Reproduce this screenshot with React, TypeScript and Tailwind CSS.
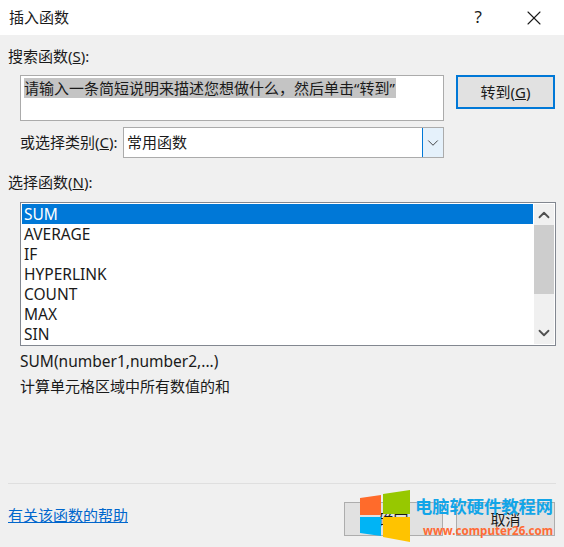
import { ChevronDown, ChevronUp, X } from "lucide-react"

const functions = ["SUM", "AVERAGE", "IF", "HYPERLINK", "COUNT", "MAX", "SIN"]

function Watermark() {
  return (
    <div className="absolute left-[360px] top-[490px] h-[52px] w-[204px]">
      <svg className="absolute left-0 top-0" width="51" height="52" viewBox="0 0 51 52">
        <polygon points="0,8 21,5 21,25 0,25" fill="#ff6b2b" />
        <polygon points="23,4 50,0 50,24 23,24" fill="#97c800" />
        <polygon points="0,27 21,27 21,46 0,43" fill="#00b4f5" />
        <polygon points="23,27 50,27 50,52 23,47" fill="#ffc300" />
      </svg>
      <div className="absolute left-[55px] top-[5px] whitespace-nowrap text-[17.25px] leading-[24px] font-bold text-[#12a5e8]">
        电脑软硬件教程网
      </div>
      <div className="absolute left-[63px] top-[33px] whitespace-nowrap text-[11.6px] leading-[16px] font-bold text-[#ff6b35]">
        www.computer26.com
      </div>
    </div>
  )
}

export default function App() {
  return (
    <div className="relative flex h-[547px] w-[564px] flex-col overflow-hidden bg-[#f0f0f0] font-['Noto_Sans','Noto_Sans_CJK_SC',sans-serif] text-[15px] text-[#1a1a1a]">
      {/* Title bar */}
      <div className="flex h-[35px] shrink-0 items-center bg-white pl-[9px]">
        <span className="flex-1 pb-[1px]">插入函数</span>
        <span className="mr-[40px] pb-[2px] text-[17px]">?</span>
        <X className="mr-[18px] h-6 w-6" strokeWidth={1.1} />
      </div>

      <div className="flex flex-1 flex-col px-2">
        <div className="mt-[11px] h-[20px] leading-[20px]">
          搜索函数(<u>S</u>):
        </div>

        {/* Search */}
        <div className="mt-[9px] flex items-start pl-3">
          <div className="h-[46px] w-[424px] border border-[#ababab] bg-white pl-[3px] pt-[2px]">
            <span className="block h-[20px] w-[372px] whitespace-nowrap bg-[#c4c4c4] leading-[20px]">
              请输入一条简短说明来描述您想做什么，然后单击“转到”
            </span>
          </div>
          <button className="ml-3 h-[34px] w-[99px] border-2 border-[#0078d7] bg-[#e1e1e1]">
            转到(<u>G</u>)
          </button>
        </div>

        {/* Category */}
        <div className="mt-[6px] flex h-[31px] items-center pl-3">
          <span className="w-[103px] whitespace-nowrap">
            或选择类别(<u>C</u>):
          </span>
          <div className="flex h-[31px] w-[321px] items-center border border-[#ababab] bg-white pl-[3px]">
            <span className="flex-1">常用函数</span>
            <div className="flex h-full w-[21px] items-center justify-center border-l border-[#0078d7] bg-[#e5f1fb]">
              <ChevronDown className="h-[18px] w-[18px] text-[#333]" strokeWidth={1.2} />
            </div>
          </div>
        </div>

        <div className="mt-[14px] h-[20px] leading-[20px]">
          选择函数(<u>N</u>):
        </div>

        {/* Function list */}
        <div className="ml-3 mt-[10px] flex h-[144px] w-[536px] border border-[#828790] bg-white p-[1px] text-[15.5px]">
          <div className="flex-1 pr-[1px]">
            {functions.map((fn, i) => (
              <div
                key={fn}
                className={
                  i === 0
                    ? "h-[20px] bg-[#0078d7] pl-[2px] leading-[20px] text-white"
                    : "h-[20px] pl-[2px] leading-[20px]"
                }
              >
                {fn}
              </div>
            ))}
          </div>
          <div className="flex w-[20px] flex-col bg-[#f0f0f0]">
            <div className="flex h-[21px] shrink-0 items-center justify-center">
              <ChevronUp className="h-[18px] w-[18px] text-[#505050]" strokeWidth={2.4} />
            </div>
            <div className="h-[69px] bg-[#cdcdcd]" />
            <div className="flex flex-1 items-end justify-center pb-[2px]">
              <ChevronDown className="h-[18px] w-[18px] text-[#505050]" strokeWidth={2.4} />
            </div>
          </div>
        </div>

        <div className="ml-3 mt-[5px] h-[20px] text-[15.5px] leading-[20px]">SUM(number1,number2,...)</div>
        <div className="ml-3 mt-[5px] h-[20px] leading-[20px]">计算单元格区域中所有数值的和</div>

        <div className="mt-[87px] w-[548px] border-t border-[#dfdfdf]" />

        {/* Footer */}
        <div className="mt-[18px] flex items-center">
          <a className="flex-1 pb-[8px] text-[#0066cc] underline">有关该函数的帮助</a>
          <button className="mr-[13px] h-[34px] w-[99px] border border-[#adadad] bg-[#e1e1e1]">
            确定
          </button>
          <button className="mr-[1px] h-[34px] w-[99px] border border-[#adadad] bg-[#e1e1e1]">
            取消
          </button>
        </div>
      </div>

      <Watermark />
    </div>
  )
}
